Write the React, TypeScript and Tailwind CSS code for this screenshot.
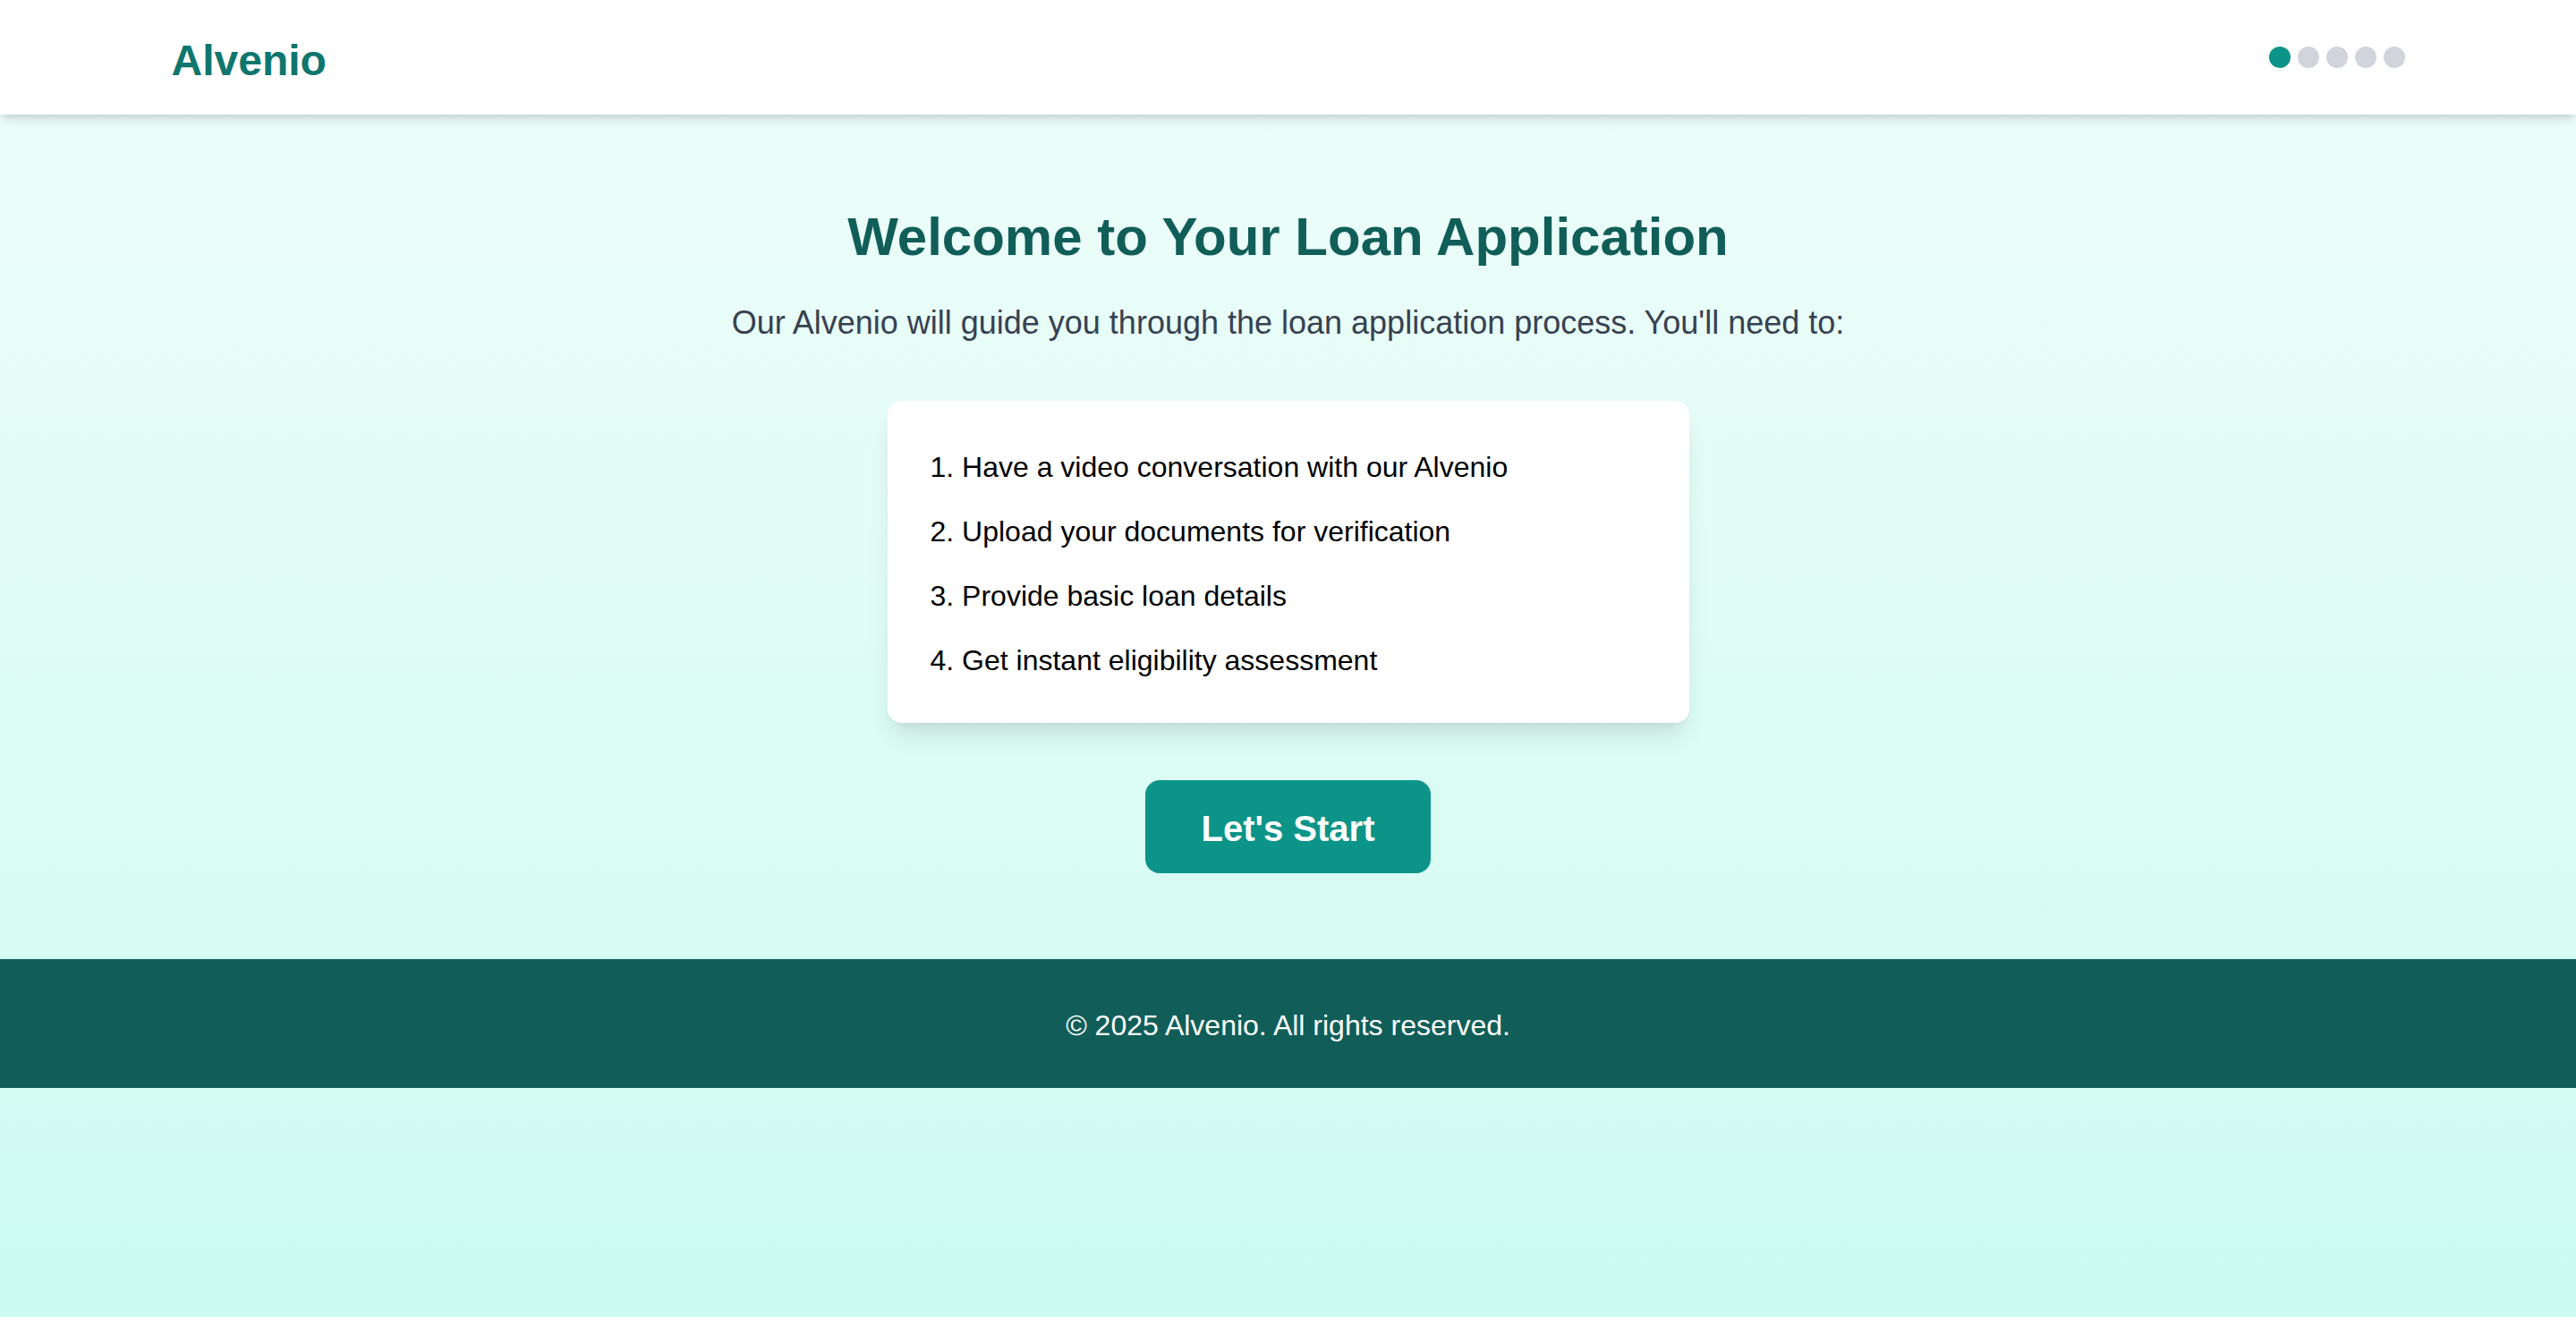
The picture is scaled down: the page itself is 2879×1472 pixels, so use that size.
const steps = [
  "Have a video conversation with our Alvenio",
  "Upload your documents for verification",
  "Provide basic loan details",
  "Get instant eligibility assessment",
];

const Header = () => (
  <header className="bg-white shadow-[0_8px_12px_-2px_rgba(0,0,0,0.12),0_4px_8px_-4px_rgba(0,0,0,0.1)] relative z-10">
    <div className="max-w-[2560px] mx-auto px-8 pt-[36px] pb-[28px] flex items-center justify-between">
      <h1 className="text-[48px] leading-[64px] font-bold text-[#0f766e]">Alvenio</h1>
      <div className="flex gap-2 -translate-y-[4px]">
        <span className="w-6 h-6 rounded-full bg-[#0d9488]" />
        <span className="w-6 h-6 rounded-full bg-[#d1d5db]" />
        <span className="w-6 h-6 rounded-full bg-[#d1d5db]" />
        <span className="w-6 h-6 rounded-full bg-[#d1d5db]" />
        <span className="w-6 h-6 rounded-full bg-[#d1d5db]" />
      </div>
    </div>
  </header>
);

export default function App() {
  return (
    <div
      className="min-h-screen bg-gradient-to-b from-[#f0fdfa] to-[#ccfbf1]"
      style={{ fontFamily: '"Liberation Sans", Arial, sans-serif' }}>
      <Header />

      <main className="max-w-[2560px] mx-auto px-8 pt-[101px] pb-24 flex flex-col items-center text-center">
        <h2 className="text-[60px] leading-[72px] font-bold text-[#115e59] mb-8">
          Welcome to Your Loan Application
        </h2>
        <p className="text-[36px] leading-[56px] text-[#374151] mb-[59px]">
          Our Alvenio will guide you through the loan application process. You'll need to:
        </p>

        <div className="w-full max-w-[896px] bg-white rounded-2xl p-12 text-left shadow-[0_20px_30px_-6px_rgba(0,0,0,0.1),0_8px_12px_-8px_rgba(0,0,0,0.1)] mb-16">
          <ol className="flex flex-col gap-6 text-[32px] leading-[48px] text-black pt-[2px] -mb-[2px]">
            {steps.map((s, i) => (
              <li key={i}>
                {i + 1}. {s}
              </li>
            ))}
          </ol>
        </div>

        <button className="bg-[#0d9488] text-white text-[40px] leading-[56px] font-bold px-[62px] pt-[26px] pb-[22px] rounded-2xl">
          Let's Start
        </button>
      </main>

      <footer className="bg-[#115e59] pt-[50px] pb-[46px] text-center">
        <p className="text-[32px] leading-[48px] text-white">© 2025 Alvenio. All rights reserved.</p>
      </footer>
    </div>
  );
}
